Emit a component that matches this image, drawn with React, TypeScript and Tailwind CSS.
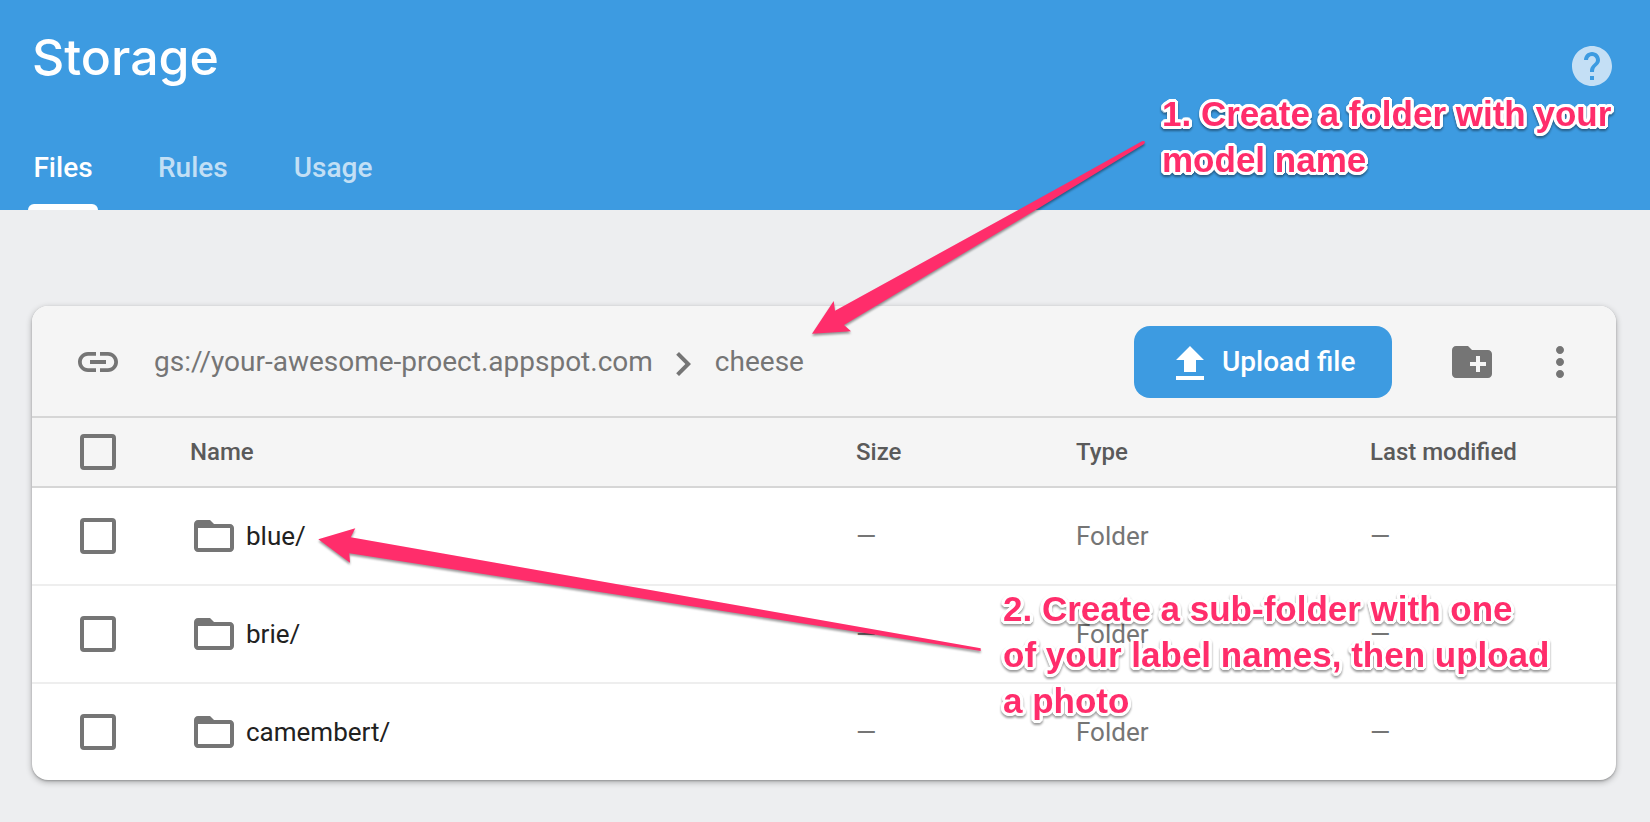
import React from "react";

type IconProps = { d: string; className?: string };

function Icon({ d, className = "" }: IconProps) {
  return (
    <svg viewBox="0 0 24 24" aria-hidden="true" className={`size-12 shrink-0 fill-current ${className}`}>
      <path d={d} />
    </svg>
  );
}

const icons = {
  help: "M12 2C6.48 2 2 6.48 2 12s4.48 10 10 10 10-4.48 10-10S17.52 2 12 2zm1 17h-2v-2h2v2zm2.07-7.75l-.9.92C13.45 12.9 13 13.5 13 15h-2v-.5c0-1.1.45-2.1 1.17-2.83l1.24-1.26c.37-.36.59-.86.59-1.41 0-1.1-.9-2-2-2s-2 .9-2 2H8c0-2.21 1.79-4 4-4s4 1.79 4 4c0 .88-.36 1.68-.93 2.25z",
  link: "M3.9 12c0-1.71 1.39-3.1 3.1-3.1h4V7H7c-2.76 0-5 2.24-5 5s2.24 5 5 5h4v-1.9H7c-1.71 0-3.1-1.39-3.1-3.1zM8 13h8v-2H8v2zm9-6h-4v1.9h4c1.71 0 3.1 1.39 3.1 3.1s-1.39 3.1-3.1 3.1h-4V17h4c2.76 0 5-2.24 5-5s-2.24-5-5-5z",
  chevron: "M10 7L8.59 8.41 13.17 13l-4.58 4.59L10 19l6-6z",
  upload: "M9 17h6v-6h4l-7-7-7 7h4zm-4 2h14v2H5z",
  newFolder:
    "M20 6h-8l-2-2H4c-1.11 0-1.99.89-1.99 2L2 18c0 1.11.89 2 2 2h16c1.11 0 2-.89 2-2V8c0-1.11-.89-2-2-2zm-1 8h-3v3h-2v-3h-3v-2h3V9h2v3h3v2z",
  more: "M12 8c1.1 0 2-.9 2-2s-.9-2-2-2-2 .9-2 2 .9 2 2 2zm0 2c-1.1 0-2 .9-2 2s.9 2 2 2 2-.9 2-2-.9-2-2-2zm0 6c-1.1 0-2 .9-2 2s.9 2 2 2 2-.9 2-2-.9-2-2-2z",
  folder: "M20 6h-8l-2-2H4c-1.1 0-1.99.9-1.99 2L2 18c0 1.1.9 2 2 2h16c1.1 0 2-.9 2-2V8c0-1.1-.9-2-2-2zm0 12H4V8h16v10z",
};

const folders = ["blue/", "brie/", "camembert/"];

function Checkbox({ label }: { label: string }) {
  return (
    <input
      type="checkbox"
      aria-label={label}
      className="block size-9 appearance-none rounded-sm border-4 border-[#757575] checked:bg-[#757575]"
    />
  );
}

function Note({ className, children }: { className: string; children: React.ReactNode }) {
  return (
    <p
      className={`absolute font-['Liberation_Sans',Arial,sans-serif] text-[35px] leading-[46px] font-bold whitespace-nowrap text-[#ff2d6b] drop-shadow-[0_2px_1px_rgba(0,0,0,0.4)] [text-shadow:3px_0_white,-3px_0_white,0_3px_white,0_-3px_white,3px_1px_white,3px_-1px_white,-3px_1px_white,-3px_-1px_white,1px_3px_white,-1px_3px_white,1px_-3px_white,-1px_-3px_white,2px_2px_white,-2px_2px_white,2px_-2px_white,-2px_-2px_white] ${className}`}
    >
      {children}
    </p>
  );
}

export default function App() {
  return (
    <div className="relative min-h-screen overflow-x-hidden bg-[#edeef0] pb-10 font-[Roboto,sans-serif]">
      <header className="flex h-[210px] flex-col justify-between bg-[#3d9be1] text-white">
        <div className="flex items-start justify-between pr-[34px] pl-8">
          <h1 className="mt-6 font-[Inter,sans-serif] text-[50px] leading-[66px] font-medium">Storage</h1>
          <button type="button" aria-label="Help" className="mt-[42px] text-[#c4dff5]">
            <Icon d={icons.help} />
          </button>
        </div>
        <nav className="flex pl-7 text-[28px] leading-8 font-medium">
          <a href="#files" className="flex w-[70px] flex-col gap-5 text-center">
            Files
            <span className="h-1.5 w-full rounded-t-md bg-white" />
          </a>
          <a href="#rules" className="ml-[60px] text-white/70">Rules</a>
          <a href="#usage" className="ml-[66px] text-white/70">Usage</a>
        </nav>
      </header>

      <main className="mt-24 mr-[34px] ml-8 overflow-hidden rounded-2xl bg-white shadow-[0_2px_6px_rgba(0,0,0,0.3),0_1px_2px_rgba(0,0,0,0.2)]">
        <div className="flex h-28 items-center border-b-2 border-[#d6d6d6] bg-[#f5f5f5] pt-0.5 pr-8 pl-[42px] text-[#757575]">
          <Icon d={icons.link} />
          <div className="ml-8 flex items-center text-[28px] leading-8">
            <span>gs://your-awesome-proect.appspot.com</span>
            <Icon d={icons.chevron} className="mr-2 ml-1.5" />
            <span>cheese</span>
          </div>
          <button
            type="button"
            className="ml-auto flex h-[72px] w-[258px] items-center gap-2 rounded-2xl bg-[#3d9be1] pl-8 text-[28px] leading-8 font-medium text-white"
          >
            <Icon d={icons.upload} />
            Upload file
          </button>
          <button type="button" aria-label="Create folder" className="ml-14">
            <Icon d={icons.newFolder} />
          </button>
          <button type="button" aria-label="More options" className="ml-10">
            <Icon d={icons.more} />
          </button>
        </div>

        <table className="w-full table-fixed border-separate border-spacing-0 text-left text-[26px] leading-8 text-[#757575]">
          <colgroup>
            <col className="w-[158px]" />
            <col />
            <col className="w-[220px]" />
            <col className="w-[294px]" />
            <col className="w-[246px]" />
          </colgroup>
          <thead className="bg-[#f5f5f5] text-2xl text-[#5a5a5a]">
            <tr className="h-[70px] *:border-b-2 *:border-[#d6d6d6]">
              <th className="pl-12">
                <Checkbox label="Select all" />
              </th>
              <th className="font-medium">Name</th>
              <th className="font-medium">Size</th>
              <th className="font-medium">Type</th>
              <th className="font-medium">Last modified</th>
            </tr>
          </thead>
          <tbody>
            {folders.map((name) => (
              <tr key={name} className="h-[98px] *:border-b-2 *:border-[#eeeeee] last:h-24 last:*:border-b-0">
                <td className="pl-12">
                  <Checkbox label={`Select ${name}`} />
                </td>
                <td>
                  <div className="flex items-center gap-2">
                    <Icon d={icons.folder} />
                    <span className="text-[#212121]">{name}</span>
                  </div>
                </td>
                <td>—</td>
                <td>Folder</td>
                <td>—</td>
              </tr>
            ))}
          </tbody>
        </table>
      </main>

      <svg
        viewBox="0 0 1650 822"
        aria-hidden="true"
        className="pointer-events-none absolute top-0 left-0 h-[822px] w-[1650px] max-w-none fill-[#ff2d6b] drop-shadow-[0_2px_1px_rgba(0,0,0,0.4)]"
      >
        <path d="M812 333.7L833.7 301L835 310.7L1020 209Q1082 175 1142 141.3Q1144.5 140.3 1145 142.3L1144 144L1034 211L844 325L851 331.3Z" />
        <path d="M318.3 539.3L355.3 528.3L350.7 537.3L980.7 648.3V651L349.3 553.3L350 562.7Z" />
      </svg>
      <Note className="top-[91px] left-[1162px]">
        1. Create a folder with your
        <br />
        model name
      </Note>
      <Note className="top-[586px] left-[1003px]">
        2. Create a sub-folder with one
        <br />
        of your label names, then upload
        <br />a photo
      </Note>
    </div>
  );
}
